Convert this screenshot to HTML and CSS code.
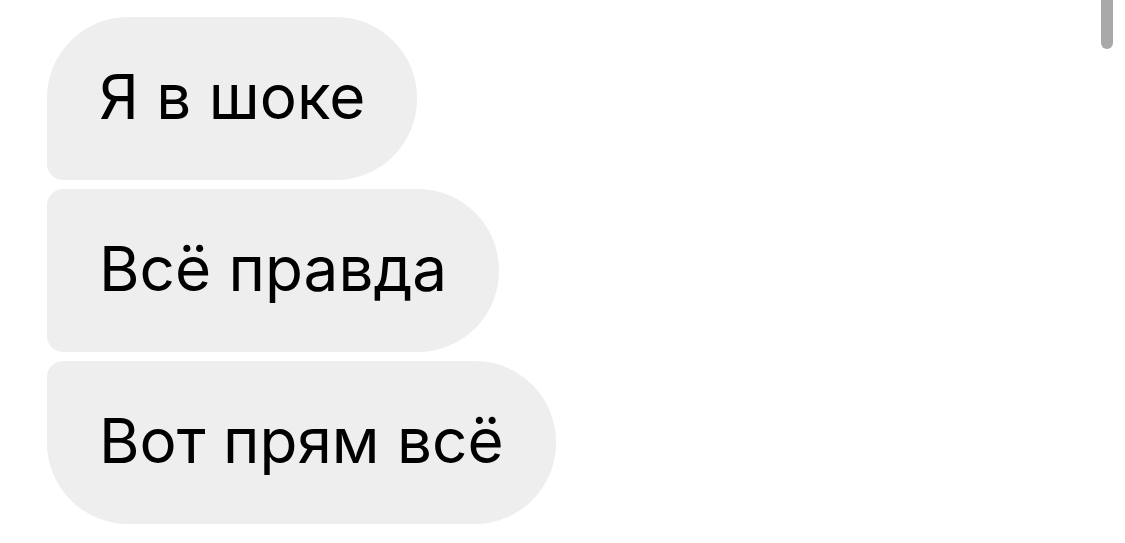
FILE: index.html
```html
<!DOCTYPE html>
<html lang="ru">
<head>
<meta charset="utf-8">
<meta name="viewport" content="width=device-width, initial-scale=1">
<title>Чат</title>
<link rel="stylesheet" href="styles.css">
</head>
<body>
<main class="chat">
  <ul class="messages">
    <li class="bubble bubble-first">Я в шоке</li>
    <li class="bubble">Всё правда</li>
    <li class="bubble bubble-last">Вот прям всё</li>
  </ul>
  <div class="scroll-thumb" aria-hidden="true"></div>
</main>
</body>
</html>
```
FILE: styles.css
```css
* {
  box-sizing: border-box;
}

body {
  margin: 0;
  background: #fff;
  color: #000;
  font-family: Inter, "Liberation Sans", sans-serif;
}

.chat {
  position: relative;
  min-height: 100vh;
  padding: 17px 47px;
}

.messages {
  display: flex;
  flex-direction: column;
  align-items: flex-start;
  gap: 9px;
  margin: 0;
  padding: 0;
  list-style: none;
}

.bubble {
  padding: 40px 52px 43px;
  border-radius: 16px 81px 81px 16px;
  background: #eee;
  font-size: 62px;
  line-height: 80px;
}

.bubble-first {
  border-top-left-radius: 81px;
}

.bubble-last {
  border-bottom-left-radius: 81px;
}

.scroll-thumb {
  position: absolute;
  top: 0;
  right: 12px;
  width: 12px;
  height: 49px;
  border-radius: 0 0 6px 6px;
  background: #a9a9a9;
}
```
